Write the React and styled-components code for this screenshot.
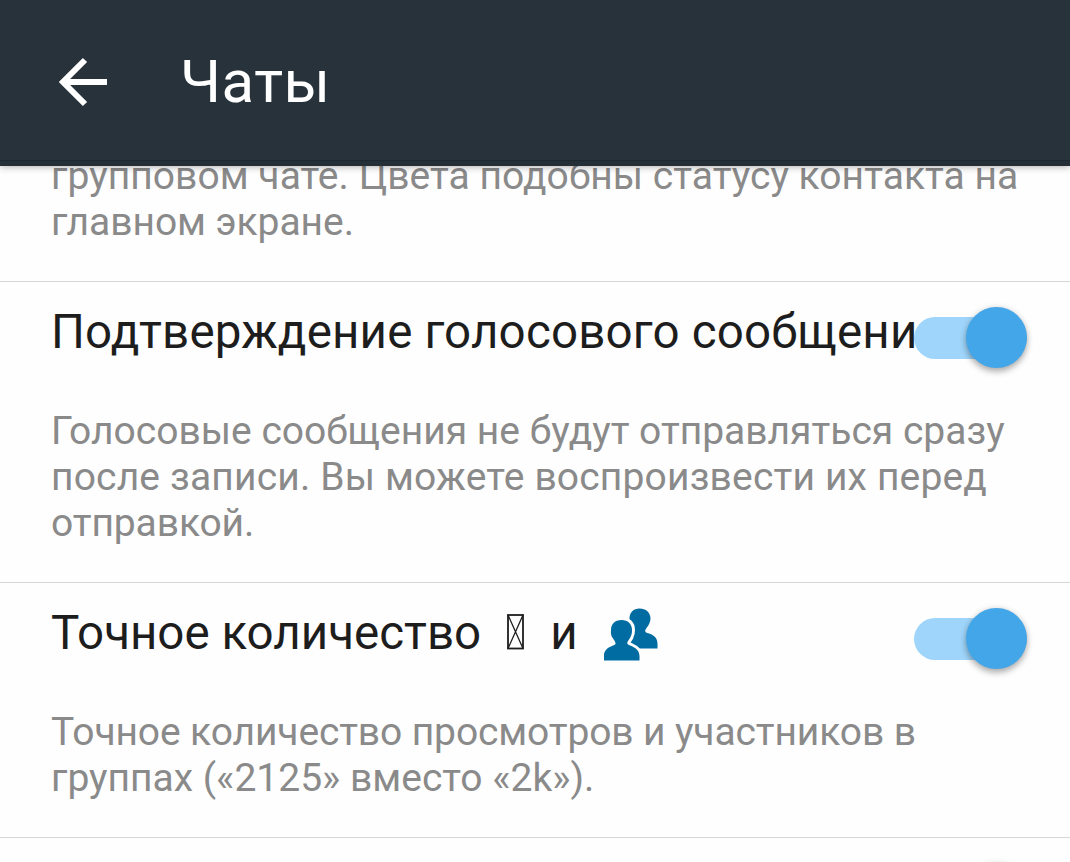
import React, { useState } from "react";
import styled, { createGlobalStyle } from "styled-components";

const GlobalStyle = createGlobalStyle`
  body {
    margin: 0;
    background: #fefefe;
    font-family: Roboto, "Noto Sans", sans-serif;
  }
`;

const Screen = styled.div`
  height: 862px;
  display: flex;
  flex-direction: column;
  overflow: hidden;
`;

const Header = styled.header`
  position: relative;
  z-index: 1;
  flex: none;
  box-sizing: border-box;
  display: flex;
  align-items: center;
  height: 166px;
  padding: 0 0 4px 57px;
  background: #27323b;
  border-bottom: 5px solid #252f37;
  box-shadow: inset 0 -1px #1c2830, 0 1px 7px rgba(0, 0, 0, 0.3);
`;

const BackButton = styled.button`
  display: flex;
  margin: 6px 0 0;
  padding: 0;
  border: 0;
  background: none;
  color: #fff;
`;

const HeaderTitle = styled.h1`
  margin: 6px 0 0 71px;
  color: #fff;
  font-size: 60px;
  line-height: 70px;
  font-weight: 400;
  letter-spacing: 0.5px;
`;

// The list is scrolled a little way under the header
const List = styled.main`
  flex: none;
  margin-top: -13px;
`;

const Item = styled.section`
  padding: ${(props) => (props.$first ? "0 0 36px" : "23px 0 36px")};
  border-bottom: 1px solid #d6d6d6;
`;

const ItemHead = styled.div`
  display: flex;
  justify-content: space-between;
  height: 103px;
  padding: 0 43px 0 51px;
`;

const ItemTitle = styled.h2`
  display: flex;
  flex: 1;
  min-width: 0;
  height: 58px;
  margin: 0;
  color: #1d1d1d;
  font-size: 47.5px;
  line-height: 54px;
  font-weight: 400;
  letter-spacing: ${(props) => props.$tracking || 0}px;
  white-space: pre;
`;

const Description = styled.p`
  margin: 0;
  padding-left: 51px;
  color: #8a8a8a;
  font-size: 39px;
  line-height: 46px;
`;

const Line = styled.span`
  display: block;
  letter-spacing: ${(props) => props.$tracking || 0}px;
  white-space: nowrap;
`;

const Track = styled.button`
  flex: none;
  display: flex;
  align-items: center;
  justify-content: ${(props) => (props.$on ? "flex-end" : "flex-start")};
  width: 113px;
  height: 42px;
  margin: 12px 0 0;
  padding: 0;
  border: 0;
  border-radius: 21px;
  background: ${(props) => (props.$on ? "#9fd5fa" : "#b9b9b9")};
`;

const Knob = styled.span`
  flex: none;
  width: 61px;
  height: 61px;
  margin-bottom: 1px;
  border-radius: 50%;
  background: ${(props) => (props.$on ? "#43a6e8" : "#f1f1f1")};
  box-shadow: 0 4px 6px rgba(0, 0, 0, 0.27), 0 0 6px rgba(0, 0, 0, 0.12);
`;

const MissingGlyph = styled.svg`
  flex: none;
  margin: 8px 26px 0 26px;
`;

const PeopleGlyph = styled.svg`
  flex: none;
  margin: 2px 0 0 26px;
`;

function Switch({ label }) {
  const [on, setOn] = useState(true);
  return (
    <Track $on={on} role="switch" aria-checked={on} aria-label={label} onClick={() => setOn(!on)}>
      <Knob $on={on} />
    </Track>
  );
}

function BackArrow() {
  return (
    <svg width="52" height="52" viewBox="0 0 52 52" fill="none" stroke="currentColor" strokeWidth="6">
      <path d="M50 26H7M28 4L6 26L28 48" />
    </svg>
  );
}

function Missing() {
  return (
    <MissingGlyph width="17" height="36" viewBox="0 0 17 36" fill="none" stroke="#1d1d1d">
      <rect x="1" y="1" width="15" height="33.5" strokeWidth="1.8" />
      <path d="M1 1L16 34.5M16 1L1 34.5" strokeWidth="1.3" />
    </MissingGlyph>
  );
}

function People() {
  return (
    <PeopleGlyph width="54" height="54" viewBox="0 0 54 54" fill="#006ca2">
      <path d="M35.500 0.500C29.500 0.500 25.500 4.500 25.500 10.500C25.500 17 28 20 29 23C30 28 24 29 24 33V40.500H53.500V36C53.500 29 49 26.500 43 25C40.500 24 41 22 42.500 20C45 17 46.500 13.500 46.500 10.500C46.500 4.500 42 0.500 35.500 0.500Z" />
      <path
        d="M17.500 12C11 12 7 16 7 22C7 24 6.500 26 8 29C9.500 31.500 12 34 11.500 36C10.500 38 0 38.500 0 48V52.500H35.500V48C35.500 39 25 38 23.500 36C22.500 34 25.500 31.500 26.500 29C28 26 28 24 28 22C28 16 24 12 17.500 12Z"
        stroke="#fefefe"
        strokeWidth="6"
        paintOrder="stroke"
      />
    </PeopleGlyph>
  );
}

export default function App() {
  return (
    <Screen>
      <GlobalStyle />
      <Header>
        <BackButton aria-label="Назад">
          <BackArrow />
        </BackButton>
        <HeaderTitle>Чаты</HeaderTitle>
      </Header>

      <List>
        <Item $first>
          <Description>
            <Line $tracking={0.045}>групповом чате. Цвета подобны статусу контакта на</Line>
            <Line $tracking={-0.05}>главном экране.</Line>
          </Description>
        </Item>

        <Item>
          <ItemHead>
            <ItemTitle $tracking={0.17}>Подтверждение голосового сообщени</ItemTitle>
            <Switch label="Подтверждение" />
          </ItemHead>
          <Description>
            <Line>Голосовые сообщения не будут отправляться сразу</Line>
            <Line $tracking={0.16}>после записи. Вы можете воспроизвести их перед</Line>
            <Line $tracking={-0.1}>отправкой.</Line>
          </Description>
        </Item>

        <Item>
          <ItemHead>
            <ItemTitle>
              Точное количество
              <Missing />
              и
              <People />
            </ItemTitle>
            <Switch label="Точное количество" />
          </ItemHead>
          <Description>
            <Line $tracking={-0.12}>Точное количество просмотров и участников в</Line>
            <Line>группах («2125» вместо «2k»).</Line>
          </Description>
        </Item>

        {/* Only the top edge of this one is in view */}
        <Item>
          <ItemHead>
            <ItemTitle />
            <Switch />
          </ItemHead>
        </Item>
      </List>
    </Screen>
  );
}
